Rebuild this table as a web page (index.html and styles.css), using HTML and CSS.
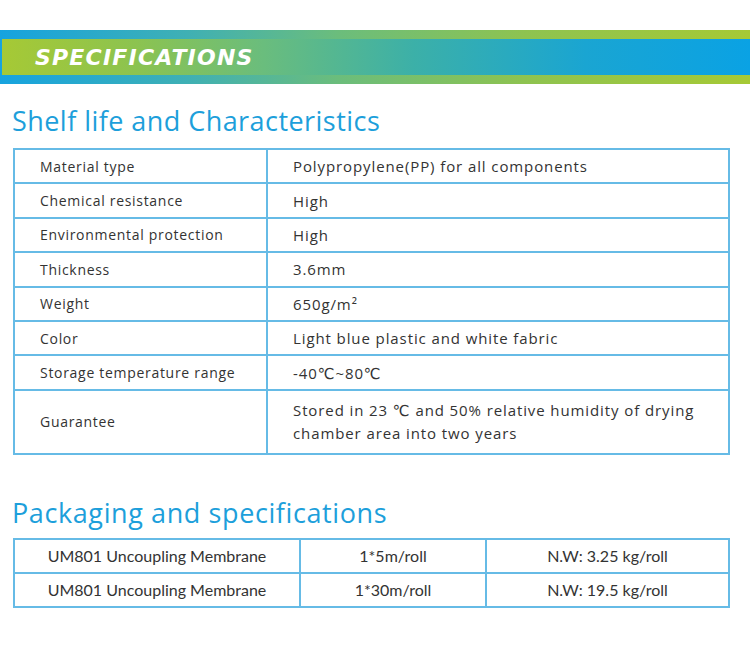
FILE: index.html
```html
<!DOCTYPE html>
<html>
<head>
<meta charset="utf-8">
<link rel="stylesheet" href="styles.css">
</head>
<body>
<div class="banner">
  <div class="banner-inner"><span class="banner-title">SPECIFICATIONS</span></div>
</div>

<h2 class="section-title first">Shelf life and Characteristics</h2>
<table class="spec">
  <tr><td class="label">Material type</td><td class="value">Polypropylene(PP) for all components</td></tr>
  <tr><td class="label">Chemical resistance</td><td class="value">High</td></tr>
  <tr><td class="label">Environmental protection</td><td class="value">High</td></tr>
  <tr><td class="label">Thickness</td><td class="value">3.6mm</td></tr>
  <tr><td class="label">Weight</td><td class="value">650g/m²</td></tr>
  <tr><td class="label">Color</td><td class="value">Light blue plastic and white fabric</td></tr>
  <tr><td class="label">Storage temperature range</td><td class="value">-40℃~80℃</td></tr>
  <tr class="tall"><td class="label">Guarantee</td><td class="value">Stored in 23 ℃ and 50% relative humidity of drying chamber area into two years</td></tr>
</table>

<h2 class="section-title second">Packaging and specifications</h2>
<table class="pack">
  <tr><td class="c1">UM801 Uncoupling Membrane</td><td class="c2">1*5m/roll</td><td class="c3">N.W: 3.25 kg/roll</td></tr>
  <tr><td class="c1">UM801 Uncoupling Membrane</td><td class="c2">1*30m/roll</td><td class="c3">N.W: 19.5 kg/roll</td></tr>
</table>
</body>
</html>
```

FILE: styles.css
```css
html, body {
  margin: 0;
  padding: 0;
  background: #ffffff;
}
body {
  width: 750px;
  height: 670px;
  overflow: hidden;
  font-family: "Open Sans", "DejaVu Sans", sans-serif;
  color: #333333;
}
.banner {
  margin-top: 30px;
  height: 54px;
  padding: 9px 0 9px 2px;
  box-sizing: border-box;
  background: linear-gradient(90deg, #16a3df 0%, #3fb0b4 25%, #6bbd7c 45%, #8ec350 70%, #a6c935 100%);
}
.banner-inner {
  height: 36px;
  display: flex;
  align-items: center;
  padding-left: 33px;
  background: linear-gradient(90deg, #a6c935 0%, #8cc350 18%, #6abd7d 35%, #3cb0a8 55%, #1aa5d2 78%, #0aa2e4 100%);
}
.banner-title {
  font-family: "DejaVu Sans", sans-serif;
  font-weight: bold;
  font-style: italic;
  font-size: 22px;
  letter-spacing: 1.2px;
  color: #ffffff;
}
.section-title {
  margin: 0;
  padding-left: 12px;
  font-weight: 500;
  font-size: 27px;
  line-height: 32px;
  color: #1d9fdb;
  letter-spacing: 0.45px;
}
.section-title.first {
  margin-top: 21px;
  margin-bottom: 11px;
}
.section-title.second {
  margin-top: 42px;
  margin-bottom: 9px;
}
.section-title.second {
  letter-spacing: 0.6px;
}
table {
  border-collapse: collapse;
  margin-left: 13px;
  width: 717px;
}
td {
  border: 2px solid #66bbe6;
  color: #333333;
  padding: 0;
}
.spec td {
  height: 32.4px;
  padding: 0 0 0 25px;
}
.spec .label {
  width: 226px;
  font-size: 14px;
  letter-spacing: 0.7px;
}
.spec .value {
  font-size: 15px;
  letter-spacing: 0.9px;
}
.spec .tall td {
  height: 62px;
}
.spec .tall .value {
  line-height: 23px;
  padding-right: 30px;
}
.pack td {
  height: 32px;
  text-align: center;
  font-family: "Lato", sans-serif;
  font-size: 16px;
}
.pack .c1 { width: 284px; }
.pack .c2 { width: 184px; }
```
